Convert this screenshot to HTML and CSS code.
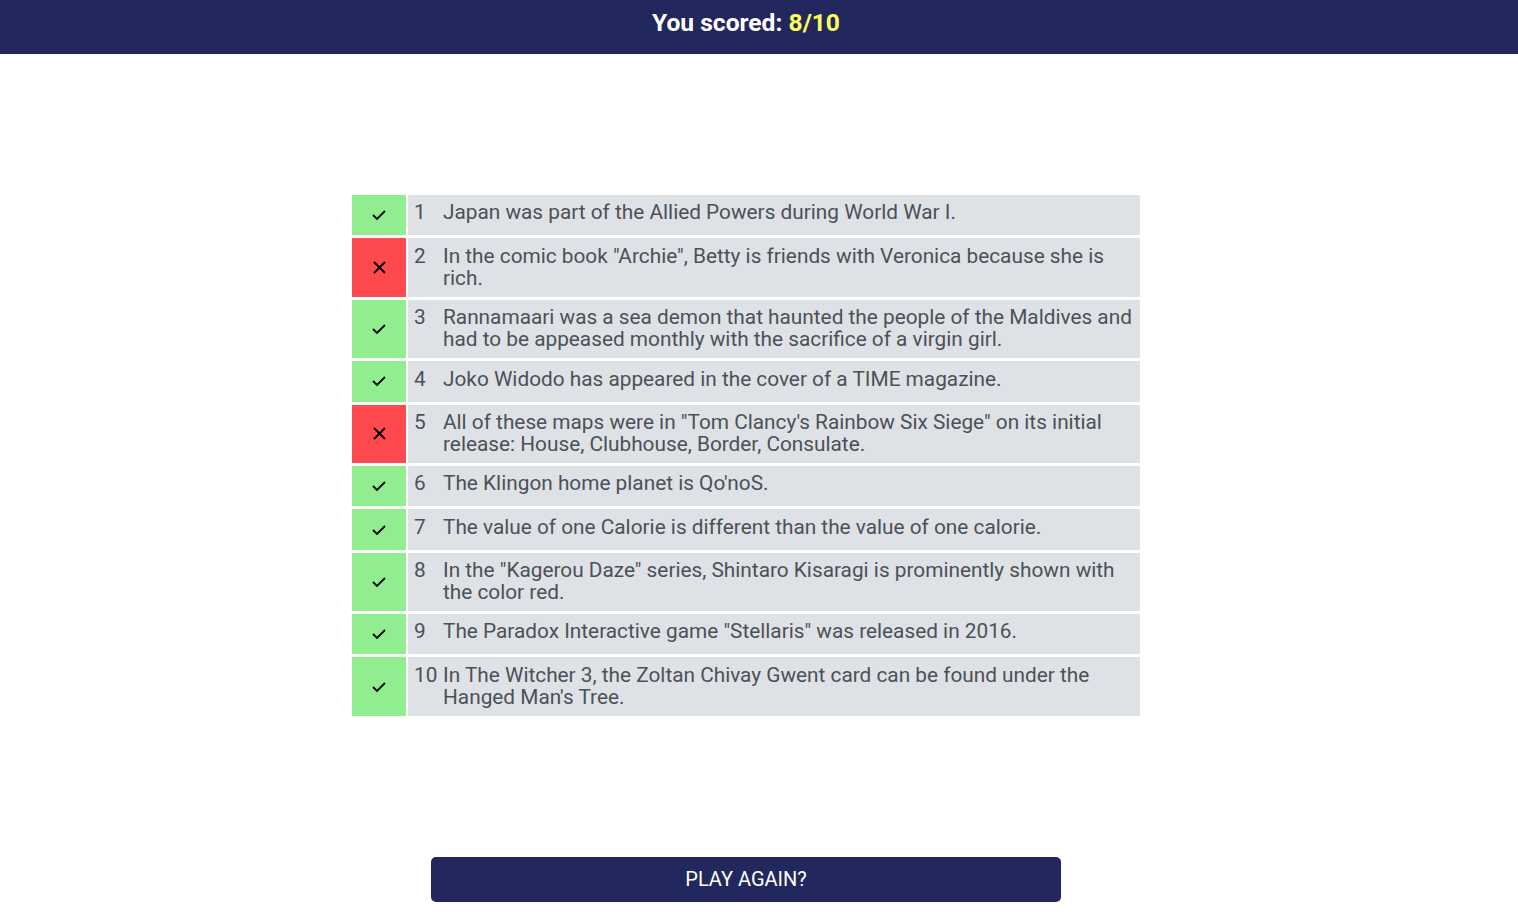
FILE: index.html
```html
<!DOCTYPE html>
<html lang="en">
<head>
<meta charset="utf-8">
<title>Quiz results</title>
<link rel="stylesheet" href="styles.css">
</head>
<body>
<header class="topbar">
  <h1 class="score">You scored: <span class="score-value">8/10</span></h1>
</header>
<main class="content">
  <div class="results">
    <div class="row">
      <div class="status ok"><svg class="icon" viewBox="0 0 14 10"><polyline points="1,5 5,9 13,1"/></svg></div>
      <div class="question"><span class="num">1</span><span class="text">Japan was part of the Allied Powers during World War I.</span></div>
    </div>
    <div class="row">
      <div class="status bad"><svg class="icon" viewBox="0 0 13 13"><path d="M1 1L12 12M12 1L1 12"/></svg></div>
      <div class="question"><span class="num">2</span><span class="text">In the comic book "Archie", Betty is friends with Veronica because she is rich.</span></div>
    </div>
    <div class="row">
      <div class="status ok"><svg class="icon" viewBox="0 0 14 10"><polyline points="1,5 5,9 13,1"/></svg></div>
      <div class="question"><span class="num">3</span><span class="text">Rannamaari was a sea demon that haunted the people of the Maldives and had to be appeased monthly with the sacrifice of a virgin girl.</span></div>
    </div>
    <div class="row">
      <div class="status ok"><svg class="icon" viewBox="0 0 14 10"><polyline points="1,5 5,9 13,1"/></svg></div>
      <div class="question"><span class="num">4</span><span class="text">Joko Widodo has appeared in the cover of a TIME magazine.</span></div>
    </div>
    <div class="row">
      <div class="status bad"><svg class="icon" viewBox="0 0 13 13"><path d="M1 1L12 12M12 1L1 12"/></svg></div>
      <div class="question"><span class="num">5</span><span class="text">All of these maps were in "Tom Clancy's Rainbow Six Siege" on its initial release: House, Clubhouse, Border, Consulate.</span></div>
    </div>
    <div class="row">
      <div class="status ok"><svg class="icon" viewBox="0 0 14 10"><polyline points="1,5 5,9 13,1"/></svg></div>
      <div class="question"><span class="num">6</span><span class="text">The Klingon home planet is Qo'noS.</span></div>
    </div>
    <div class="row">
      <div class="status ok"><svg class="icon" viewBox="0 0 14 10"><polyline points="1,5 5,9 13,1"/></svg></div>
      <div class="question"><span class="num">7</span><span class="text">The value of one Calorie is different than the value of one calorie.</span></div>
    </div>
    <div class="row">
      <div class="status ok"><svg class="icon" viewBox="0 0 14 10"><polyline points="1,5 5,9 13,1"/></svg></div>
      <div class="question"><span class="num">8</span><span class="text">In the "Kagerou Daze" series, Shintaro Kisaragi is prominently shown with the color red.</span></div>
    </div>
    <div class="row">
      <div class="status ok"><svg class="icon" viewBox="0 0 14 10"><polyline points="1,5 5,9 13,1"/></svg></div>
      <div class="question"><span class="num">9</span><span class="text">The Paradox Interactive game "Stellaris" was released in 2016.</span></div>
    </div>
    <div class="row">
      <div class="status ok"><svg class="icon" viewBox="0 0 14 10"><polyline points="1,5 5,9 13,1"/></svg></div>
      <div class="question"><span class="num">10</span><span class="text">In The Witcher 3, the Zoltan Chivay Gwent card can be found under the Hanged Man's Tree.</span></div>
    </div>
  </div>
  <button class="play-again" type="button">PLAY AGAIN?</button>
</main>
</body>
</html>
```
FILE: styles.css
```css
* { box-sizing: border-box; }

html, body {
  margin: 0;
  padding: 0;
  background: #ffffff;
  font-family: Roboto, "Liberation Sans", sans-serif;
}

.topbar {
  height: 54px;
  background: #22285e;
  display: flex;
  justify-content: center;
  align-items: center;
  padding-right: 26px;
}

.score {
  margin: 0;
  font-size: 24.6px;
  font-weight: 700;
  color: #ffffff;
  line-height: 28px;
  padding-bottom: 8px;
}

.score-value { color: #ffff5c; }

.content {
  width: 1492px;
  display: flex;
  flex-direction: column;
  align-items: center;
  padding-top: 141px;
}

.results {
  width: 788px;
  display: flex;
  flex-direction: column;
  gap: 3px;
}

.row {
  display: grid;
  grid-template-columns: 54px 1fr;
  column-gap: 2px;
  min-height: 40.3px;
}

.status {
  display: flex;
  align-items: center;
  justify-content: center;
}

.status.ok { background: #90ee90; }
.status.bad { background: #fe4a4f; }

.icon {
  fill: none;
  stroke: #000000;
  stroke-width: 1.8;
  overflow: visible;
}

.status.ok .icon { width: 14px; height: 10px; }
.status.bad .icon { width: 13px; height: 13px; }

.question {
  background: #dee2e6;
  display: flex;
  align-items: flex-start;
  padding: 6.25px 8px 8.25px 6px;
  font-size: 20.8px;
  line-height: 22px;
  color: #4b5157;
}

.num {
  flex: 0 0 29px;
}

.text { flex: 1 1 auto; }

.play-again {
  margin-top: 141px;
  width: 630px;
  height: 45px;
  border: none;
  border-radius: 5px;
  background: #22285e;
  color: #ffffff;
  font-family: Roboto, "Liberation Sans", sans-serif;
  font-size: 20px;
  padding: 0;
  cursor: pointer;
}
```
